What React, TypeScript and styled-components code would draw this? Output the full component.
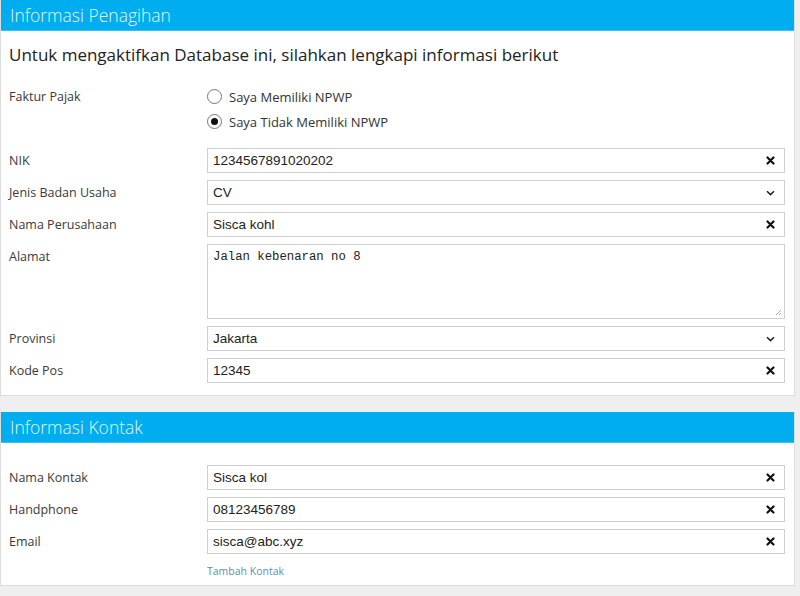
import React, {useState} from "react";
import styled, {createGlobalStyle} from "styled-components";

const GlobalStyle = createGlobalStyle`
  body {
    margin: 0;
    background: #efefef;
    font-family: "Open Sans", "Noto Sans", sans-serif;
  }
`

const Page = styled.div`
  width: 795px;
  display: flex;
  flex-direction: column;
  gap: 16px;
`

const Panel = styled.section`
  background: #fff;
  border: 1px solid #dcdcdc;
  border-top: none;
`

const PanelHeader = styled.div`
  height: 30px;
  background: #00adee;
  border-bottom: 1px solid #3fc0f0;
  color: #e3f6fd;
  font-size: 17.5px;
  font-weight: 300;
  line-height: 30px;
  padding-left: 9px;
`

const PanelBody = styled.div<{$top: number; $bottom: number}>`
  padding: ${p => p.$top}px 9px ${p => p.$bottom}px 8px;
`

const Lead = styled.h3`
  margin: 0 0 17px;
  font-size: 17px;
  font-weight: 400;
  line-height: 24px;
  color: #222;
`

const Row = styled.div<{$gap?: number}>`
  display: grid;
  grid-template-columns: 198px 1fr;
  align-items: start;
  margin-bottom: ${p => p.$gap ?? 7}px;
`

const Label = styled.label`
  font-size: 12.5px;
  color: #3a3a3a;
  line-height: 25px;
`

const RadioGroup = styled.div`
  display: flex;
  flex-direction: column;
`

const RadioOption = styled.label`
  display: flex;
  align-items: center;
  gap: 7px;
  height: 25px;
  font-size: 13px;
  color: #333;
  cursor: pointer;
`

const RadioCircle = styled.span<{$checked: boolean}>`
  width: 13px;
  height: 13px;
  border-radius: 50%;
  border: 1px solid #777;
  background: #fff;
  display: flex;
  align-items: center;
  justify-content: center;
  &::after {
    content: "";
    width: 7px;
    height: 7px;
    border-radius: 50%;
    background: ${p => (p.$checked ? "#111" : "transparent")};
  }
`

const Field = styled.div`
  height: 25px;
  box-sizing: border-box;
  border: 1px solid #cfcfcf;
  display: flex;
  align-items: center;
  padding: 0 9px 0 5px;
  background: #fff;
`

const FieldText = styled.span`
  flex: 1;
  font-family: "Liberation Sans", Arial, sans-serif;
  font-size: 13.5px;
  color: #222;
`

const TextArea = styled.div`
  height: 75px;
  box-sizing: border-box;
  border: 1px solid #cfcfcf;
  padding: 5px 5px;
  font-family: "Liberation Mono", monospace;
  font-size: 12.3px;
  color: #222;
  display: flex;
  flex-direction: column;
  justify-content: space-between;
`

const Grip = styled.svg`
  align-self: flex-end;
  margin-right: -3px;
  margin-bottom: -3px;
`

const Link = styled.a`
  font-size: 10.5px;
  color: #5d8fb0;
  text-decoration: none;
  line-height: 20px;
`

const ClearIcon = () => (
  <svg width="9" height="9" viewBox="0 0 9 9">
    <path d="M1.5 1.5L7.5 7.5M7.5 1.5L1.5 7.5" stroke="#111" strokeWidth="2.2" strokeLinecap="round"/>
  </svg>
)

const ChevronIcon = () => (
  <svg width="9" height="6" viewBox="0 0 9 6">
    <path d="M1 1.2L4.5 4.6L8 1.2" stroke="#222" strokeWidth="1.5" fill="none"/>
  </svg>
)

const InputRow = ({label, value, kind = "clear"}: {label: string; value: string; kind?: "clear" | "select"}) => (
  <Row>
    <Label>{label}</Label>
    <Field>
      <FieldText>{value}</FieldText>
      {kind === "clear" ? <ClearIcon/> : <ChevronIcon/>}
    </Field>
  </Row>
)

export default function App() {
  const [npwp, setNpwp] = useState(false)

  return <>
    <GlobalStyle/>
    <Page>
      <Panel>
        <PanelHeader>Informasi Penagihan</PanelHeader>
        <PanelBody $top={12} $bottom={5}>
          <Lead>Untuk mengaktifkan Database ini, silahkan lengkapi informasi berikut</Lead>
          <Row $gap={14}>
            <Label>Faktur Pajak</Label>
            <RadioGroup>
              <RadioOption onClick={() => setNpwp(true)}>
                <RadioCircle $checked={npwp}/>Saya Memiliki NPWP
              </RadioOption>
              <RadioOption onClick={() => setNpwp(false)}>
                <RadioCircle $checked={!npwp}/>Saya Tidak Memiliki NPWP
              </RadioOption>
            </RadioGroup>
          </Row>
          <InputRow label="NIK" value="1234567891020202"/>
          <InputRow label="Jenis Badan Usaha" value="CV" kind="select"/>
          <InputRow label="Nama Perusahaan" value="Sisca kohl"/>
          <Row>
            <Label>Alamat</Label>
            <TextArea>
              <span>Jalan kebenaran no 8</span>
              <Grip width="8" height="8" viewBox="0 0 8 8">
                <path d="M7 2L2 7M7 5L5 7" stroke="#aaa" strokeWidth="1"/>
              </Grip>
            </TextArea>
          </Row>
          <InputRow label="Provinsi" value="Jakarta" kind="select"/>
          <InputRow label="Kode Pos" value="12345"/>
        </PanelBody>
      </Panel>
      <Panel>
        <PanelHeader>Informasi Kontak</PanelHeader>
        <PanelBody $top={22} $bottom={4}>
          <InputRow label="Nama Kontak" value="Sisca kol"/>
          <InputRow label="Handphone" value="08123456789"/>
          <InputRow label="Email" value="sisca@abc.xyz"/>
          <Row $gap={0}>
            <span/>
            <Link href="#">Tambah Kontak</Link>
          </Row>
        </PanelBody>
      </Panel>
    </Page>
  </>
}
